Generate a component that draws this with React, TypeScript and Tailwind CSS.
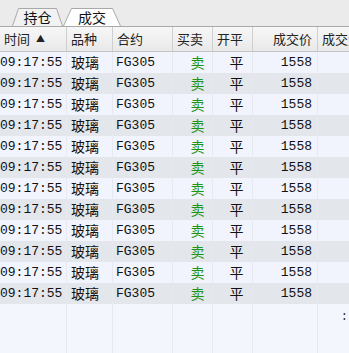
const cols = [
  { key: "time", label: "时间", w: "w-[67px]", align: "left" },
  { key: "name", label: "品种", w: "w-[46px]", align: "left" },
  { key: "code", label: "合约", w: "w-[60px]", align: "left" },
  { key: "side", label: "买卖", w: "w-[40px]", align: "center" },
  { key: "oc", label: "开平", w: "w-[40px]", align: "center" },
  { key: "price", label: "成交价", w: "w-[65px]", align: "right" },
  { key: "vol", label: "成交量", w: "w-[60px]", align: "left" },
];

const rows = Array.from({ length: 12 }, () => ({
  time: "09:17:55",
  name: "玻璃",
  code: "FG305",
  side: "卖",
  oc: "平",
  price: "1558",
}));

const cn = "font-['SimSun','Noto_Sans_CJK_SC',sans-serif]";
const mono = "font-['Liberation_Mono','Noto_Sans_CJK_SC',monospace]";

function Tab({ label, active }: { label: string; active?: boolean }) {
  return (
    <div className={`relative h-[18px] flex items-center justify-center ${active ? "w-[58px] z-10" : "w-[51px]"}`}>
      <svg className="absolute inset-0" width={active ? 58 : 51} height="18">
        <path
          d={active ? "M0.5 18 L8.5 0.5 L49.5 0.5 L57.5 18" : "M0.5 18 L6.5 0.5 L44.5 0.5 L50.5 18"}
          fill={active ? "#ffffff" : "#f2f2f2"}
          stroke="#a9a9a9"
        />
      </svg>
      <span className={`relative text-[14px] text-[#111] ${cn}`}>{label}</span>
    </div>
  );
}

export default function App() {
  return (
    <div className="w-[349px] h-[353px] overflow-hidden bg-[#f3f6fd] select-none">
      {/* Tabs */}
      <div className="h-[27px] bg-[#ebebeb] border-b border-[#a9a9a9] flex items-end pl-[12px]">
        <Tab label="持仓" />
        <Tab label="成交" active />
      </div>

      {/* Header */}
      <div className="h-[25px] flex bg-gradient-to-b from-[#f7f7f7] to-[#e9e9e9] border-b border-[#c4c4c4]">
        {cols.map((c) => (
          <div
            key={c.key}
            className={`${c.w} shrink-0 h-full flex items-center border-r border-[#cfcfcf] text-[13px] text-[#222] whitespace-nowrap overflow-hidden ${cn} ${
              c.align === "right" ? "justify-end pr-[5px]" : "pl-[4px]"
            }`}
          >
            {c.label}
            {c.key === "time" && <span className="ml-[6px] text-[9px]">▲</span>}
          </div>
        ))}
      </div>

      {/* Rows */}
      <div className="relative">
        {rows.map((r, i) => (
          <div
            key={i}
            className={`h-[21px] flex items-center text-[13px] text-[#111] ${i % 2 ? "bg-[#e3e6eb]" : "bg-[#f1f4fc]"}`}
          >
            <div className={`w-[67px] shrink-0 border-r border-[#e6e9f0] h-full flex items-center ${mono}`}>
              {r.time}
            </div>
            <div className={`w-[46px] shrink-0 border-r border-[#e6e9f0] h-full flex items-center pl-[4px] text-[14px] ${cn}`}>
              {r.name}
            </div>
            <div className={`w-[60px] shrink-0 border-r border-[#e6e9f0] h-full flex items-center pl-[3px] ${mono}`}>
              {r.code}
            </div>
            <div className={`w-[40px] shrink-0 border-r border-[#e6e9f0] h-full flex items-center justify-center pl-[10px] text-[14px] text-[#1a961a] ${cn}`}>
              {r.side}
            </div>
            <div className={`w-[40px] shrink-0 border-r border-[#e6e9f0] h-full flex items-center justify-center pl-[8px] text-[14px] ${cn}`}>
              {r.oc}
            </div>
            <div className={`w-[65px] shrink-0 border-r border-[#e6e9f0] h-full flex items-center justify-end pr-[5px] ${mono}`}>
              {r.price}
            </div>
            <div className="w-[60px] shrink-0 h-full" />
          </div>
        ))}

        {/* empty area */}
        <div className="h-[60px] flex">
          {cols.map((c, i) => (
            <div
              key={c.key}
              className={`${c.w} shrink-0 h-full ${i < cols.length - 1 ? "border-r border-[#e6e9f2]" : ""}`}
            />
          ))}
        </div>
        <span className={`absolute right-[1px] top-[256px] text-[12px] text-[#333] ${mono}`}>:</span>
      </div>
    </div>
  );
}
